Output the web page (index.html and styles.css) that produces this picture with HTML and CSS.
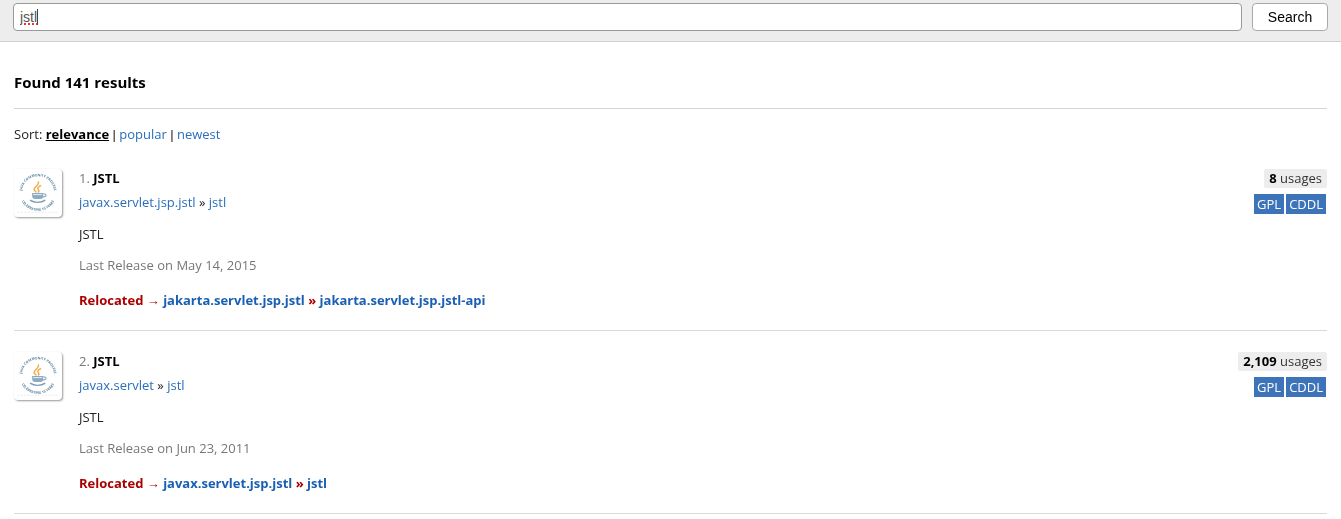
FILE: index.html
```
<!DOCTYPE html>
<html lang="en">
<head>
    <meta charset="utf-8">
    <title>Search results for jstl</title>
    <link rel="stylesheet" href="styles.css">
</head>
<body>
    <!-- shared logo, used by every result -->
    <svg class="defs" width="0" height="0" aria-hidden="true">
        <symbol id="jcp-logo" viewBox="3 3 42 42" overflow="visible">
            <path id="arc-top" d="M10.500 27A14 14 0 1 1 37.500 27" fill="none"/>
            <path id="arc-bottom" d="M8 26A16.200 16.200 0 0 0 40 26" fill="none"/>
            <text class="logo-text"><textPath href="#arc-top" startOffset="50%" text-anchor="middle">JAVA COMMUNITY PROCESS</textPath></text>
            <text class="logo-text"><textPath href="#arc-bottom" startOffset="50%" text-anchor="middle">CELEBRATING 15 YEARS</textPath></text>
            <g transform="translate(3 2.500) scale(.88)">
                <path d="M24 13c2 3-4 5-4 8 0 1 2 2 2 3M27 17c-3 1-4 3-3 4s1 2 0 3" fill="none" stroke="#f0b050" stroke-width="1.500"/>
                <path d="M18 24.500h11v2c0 3-1 4-3 4h-5c-2 0-3-1-3-4z" fill="#8cabc3"/>
                <path d="M19 26h9" stroke="#e4edf3" stroke-width="1"/>
                <path d="M29 25.500c4-1 4 3-1 3" fill="none" stroke="#7d9eb8"/>
                <path d="M16 31.500c4 3 11 3 15 0" fill="none" stroke="#7d9eb8" stroke-width="1.400"/>
            </g>
            <path d="M6 41h36" stroke="#f0f0f0" stroke-dasharray="2 1"/>
        </symbol>
    </svg>

    <form class="search">
        <input type="text" id="query" class="search-input" value="jstl" aria-label="Search" spellcheck="true" autofocus>
        <button type="submit" class="search-button">Search</button>
    </form>

    <main class="content">
        <h2>Found 141 results</h2>
        <p class="sort">Sort: <a href="#" class="current">relevance</a> <span>|</span> <a href="#">popular</a> <span>|</span> <a href="#">newest</a></p>

        <div class="result">
            <a href="#" class="logo" aria-label="JSTL"><svg width="48" height="48"><use href="#jcp-logo"/></svg></a>
            <div class="info">
                <h3><span>1.</span> <a href="#">JSTL</a></h3>
                <p class="subtitle"><a href="#">javax.servlet.jsp.jstl</a> » <a href="#">jstl</a></p>
                <p class="description">JSTL</p>
                <p class="release">Last Release on May 14, 2015</p>
                <p class="relocated">Relocated <span class="arrow">→</span> <a href="#">jakarta.servlet.jsp.jstl</a> » <a href="#">jakarta.servlet.jsp.jstl-api</a></p>
            </div>
            <div class="meta">
                <a href="#" class="usages"><b>8</b> usages</a>
                <div class="licenses"><span>GPL</span><span>CDDL</span></div>
            </div>
        </div>

        <div class="result">
            <a href="#" class="logo" aria-label="JSTL"><svg width="48" height="48"><use href="#jcp-logo"/></svg></a>
            <div class="info">
                <h3><span>2.</span> <a href="#">JSTL</a></h3>
                <p class="subtitle"><a href="#">javax.servlet</a> » <a href="#">jstl</a></p>
                <p class="description">JSTL</p>
                <p class="release">Last Release on Jun 23, 2011</p>
                <p class="relocated">Relocated <span class="arrow">→</span> <a href="#">javax.servlet.jsp.jstl</a> » <a href="#">jstl</a></p>
            </div>
            <div class="meta">
                <a href="#" class="usages"><b>2,109</b> usages</a>
                <div class="licenses"><span>GPL</span><span>CDDL</span></div>
            </div>
        </div>
    </main>
</body>
</html>
```

FILE: styles.css
```
body {
    margin: 0;
    background: #fff;
    color: #222;
    font: 13px/20px "Open Sans", "Segoe UI", sans-serif;
}

a {
    color: #2a6ebb;
    text-decoration: none;
}

h2, h3, p {
    margin: 0;
}

.defs {
    display: block;
}

.search {
    display: flex;
    gap: 10px;
    padding: 3px 13px 10px;
    background: #ededed;
    border-bottom: 1px solid #d0d0d0;
}

.search-input,
.search-button {
    box-sizing: border-box;
    height: 28px;
    border: 1px solid #999;
    border-radius: 4px;
    background: #fff;
    font: 14px "Liberation Sans", Arial, sans-serif;
}

.search-input {
    flex: 1;
    min-width: 0;
    padding: 0 6px;
    background: linear-gradient(#444, #444) 23px 5px / 1px 16px no-repeat #fff; /* text cursor */
    color: #555;
    outline: none;
    text-decoration: underline dotted 2px #e33;
}

.search-button {
    width: 76px;
    border-color: #aaa;
    color: #000;
    cursor: pointer;
}

.content {
    padding: 30px 14px 0;
}

h2 {
    padding-bottom: 15px;
    border-bottom: 1px solid #d4d4d4;
    color: #000;
    font-size: 15px;
    line-height: 21px;
}

.sort {
    padding: 15px 0 24px;
}

.sort span,
.arrow {
    font-family: "Liberation Sans", Arial, sans-serif;
    line-height: 1;
}

.sort .current {
    color: #000;
    font-weight: bold;
    text-decoration: underline;
}

.result {
    display: flex;
    align-items: flex-start;
    margin-bottom: 20px;
    padding-bottom: 20px;
    border-bottom: 1px solid #d9d9d9;
}

.logo {
    display: block;
    width: 48px;
    height: 48px;
    margin: 1px 17px 0 0;
    border-radius: 4px;
    box-shadow: 1px 1px 2px #999;
}

.logo svg {
    display: block;
}

.logo-text {
    fill: #54809f;
    font: bold 3px "Open Sans", sans-serif;
}

.info {
    flex: 1;
}

h3 {
    color: #777;
    font-size: 13px;
    font-weight: normal;
}

h3 a {
    color: #000;
    font-weight: bold;
}

.subtitle {
    padding: 4px 0 12px;
}

.release {
    padding: 11px 0 15px;
    color: #777;
}

.relocated {
    color: #a00;
    font-weight: bold;
}

.relocated a {
    color: #1a5fb4;
}

.meta {
    display: flex;
    flex-direction: column;
    align-items: flex-end;
    gap: 6px;
    padding-top: 1px;
}

.usages {
    padding: 0 5px;
    border-radius: 2px;
    background: #ededed;
    color: #333;
    line-height: 19px;
}

.usages b {
    color: #000;
}

.licenses {
    display: flex;
    gap: 2px;
    margin-right: 1px;
}

.licenses span {
    padding: 0 3px;
    background: #3d74b9;
    color: #fff;
}
```
